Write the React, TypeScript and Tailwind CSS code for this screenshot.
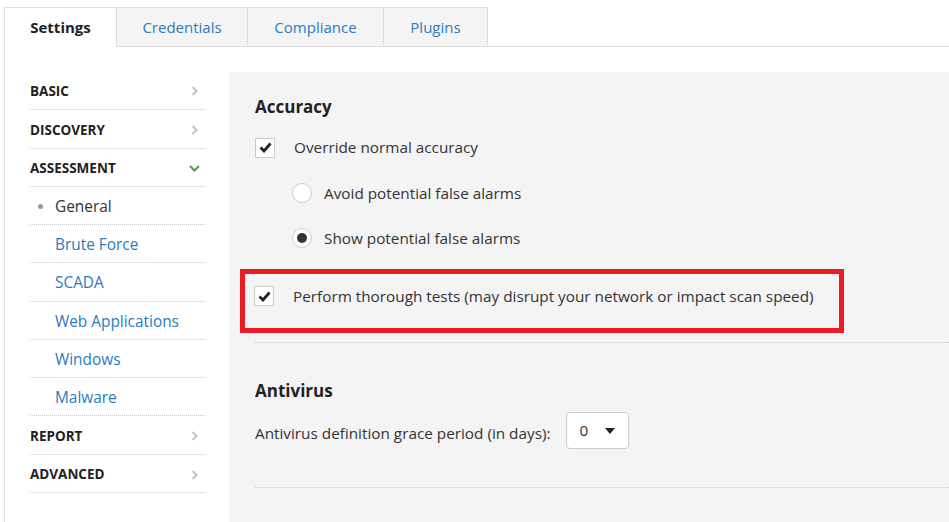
import React from 'react';

const tabs = [
  { label: 'Settings', active: true, cls: 'w-[112px] border-l border-t text-[#222] font-bold bg-white h-[40px]' },
  { label: 'Credentials', active: false, cls: 'w-[131px] border-l border-t border-b bg-[#f4f4f4] text-[#2b7bbf] h-[40px]' },
  { label: 'Compliance', active: false, cls: 'w-[136px] border-l border-t border-b bg-[#f4f4f4] text-[#2b7bbf] h-[40px]' },
  { label: 'Plugins', active: false, cls: 'w-[105px] border-l border-t border-r border-b bg-[#f4f4f4] text-[#2b7bbf] h-[40px]' },
];

type NavItem = { label: string; kind: 'head' | 'sub' | 'current'; open?: boolean; h: string };

const nav: NavItem[] = [
  { label: 'BASIC', kind: 'head', h: 'h-[39px]' },
  { label: 'DISCOVERY', kind: 'head', h: 'h-[39px]' },
  { label: 'ASSESSMENT', kind: 'head', open: true, h: 'h-[38px]' },
  { label: 'General', kind: 'current', h: 'h-[38px]' },
  { label: 'Brute Force', kind: 'sub', h: 'h-[38px]' },
  { label: 'SCADA', kind: 'sub', h: 'h-[39px]' },
  { label: 'Web Applications', kind: 'sub', h: 'h-[38px]' },
  { label: 'Windows', kind: 'sub', h: 'h-[38px]' },
  { label: 'Malware', kind: 'sub', h: 'h-[38px]' },
  { label: 'REPORT', kind: 'head', h: 'h-[39px]' },
  { label: 'ADVANCED', kind: 'head', h: 'h-[38px]' },
];

function ChevronRight() {
  return (
    <svg width="7" height="10" viewBox="0 0 7 10" className="mr-[7px]">
      <polyline points="1.5,1 5.5,5 1.5,9" fill="none" stroke="#c4c4c4" strokeWidth="2" />
    </svg>
  );
}

function ChevronDown() {
  return (
    <svg width="11" height="7" viewBox="0 0 11 7" className="mr-[5px]">
      <polyline points="1,1 5.5,5.5 10,1" fill="none" stroke="#3bab3c" strokeWidth="2" />
    </svg>
  );
}

function Checkbox() {
  return (
    <div className="w-[20px] h-[20px] border border-[#cccccc] bg-white flex items-center justify-center shrink-0">
      <svg width="13" height="11" viewBox="0 0 13 11">
        <polyline points="1.5,5.5 5,9 11.5,1.5" fill="none" stroke="#222" strokeWidth="2.8" />
      </svg>
    </div>
  );
}

function Radio({ checked }: { checked?: boolean }) {
  return (
    <div className="w-[20px] h-[20px] rounded-full border border-[#cccccc] bg-white flex items-center justify-center shrink-0">
      {checked && <div className="w-[10px] h-[10px] rounded-full bg-[#333]" />}
    </div>
  );
}

export default function App() {
  return (
    <div className="h-[522px] overflow-hidden bg-white text-[#333] font-['Open_Sans',sans-serif] pt-[7px] pl-[4px]">
      {/* tabs */}
      <div className="flex items-end">
        {tabs.map(t => (
          <div key={t.label} className={`${t.cls} border-[#dddddd] flex items-center justify-center text-[15px]`}>
            {t.label}
          </div>
        ))}
        <div className="flex-1 border-b border-[#dddddd]" />
      </div>

      <div className="flex border-l border-[#dddddd] h-[480px]">
        {/* sidebar */}
        <div className="w-[224px] pl-[25px] pt-[24px] shrink-0">
          <div className="w-[175px]">
            {nav.map(item => (
              <div key={item.label} className={`${item.h} border-b border-dotted border-[#cccccc] flex items-center justify-between pt-[2px]`}>
                {item.kind === 'head' && (
                  <>
                    <span className="text-[13.5px] font-bold text-[#222]">{item.label}</span>
                    {item.open ? <ChevronDown /> : <ChevronRight />}
                  </>
                )}
                {item.kind === 'current' && (
                  <span className="flex items-center text-[15.4px] text-[#333]">
                    <span className="w-[5px] h-[5px] rounded-full bg-[#999] ml-[8px] mr-[12px]" />
                    {item.label}
                  </span>
                )}
                {item.kind === 'sub' && <span className="text-[15.4px] text-[#2b7bbf] ml-[25px]">{item.label}</span>}
              </div>
            ))}
          </div>
        </div>

        {/* content */}
        <div className="flex-1 bg-[#f4f4f4] mt-[25px] pl-[26px] pt-[23px] text-[15.3px]">
          <h2 className="text-[17px] font-bold text-[#222] leading-[24px]">Accuracy</h2>

          <div className="flex items-center mt-[18px] h-[21px]">
            <Checkbox />
            <span className="ml-[19px]">Override normal accuracy</span>
          </div>

          <div className="flex items-center mt-[25px] ml-[37px] h-[20px]">
            <Radio />
            <span className="ml-[12px]">Avoid potential false alarms</span>
          </div>
          <div className="flex items-center mt-[25px] ml-[37px] h-[20px]">
            <Radio checked />
            <span className="ml-[12px]">Show potential false alarms</span>
          </div>

          <div className="-ml-[15px] mt-[21px] w-[604px] h-[64px] border-[5px] border-[#ed1c24] pl-[9px] pt-[12px]">
            <div className="flex items-center h-[20px]">
              <Checkbox />
              <span className="ml-[19px]">Perform thorough tests (may disrupt your network or impact scan speed)</span>
            </div>
          </div>

          <div className="mt-[9px] border-b border-dotted border-[#cccccc]" />

          <h2 className="text-[17px] font-bold text-[#222] leading-[24px] mt-[36px]">Antivirus</h2>

          <div className="flex items-start mt-[9px]">
            <span className="mt-[10px] leading-[22px]">Antivirus definition grace period (in days):</span>
            <div className="ml-[16px] w-[63px] h-[37px] bg-white border border-[#cccccc] rounded-[4px] flex items-center justify-between pl-[12px] pr-[13px]">
              <span>0</span>
              <svg width="10" height="6" viewBox="0 0 10 6">
                <polygon points="0,0 10,0 5,6" fill="#222" />
              </svg>
            </div>
          </div>

          <div className="mt-[38px] border-b border-dotted border-[#cccccc]" />
        </div>
      </div>
    </div>
  );
}
